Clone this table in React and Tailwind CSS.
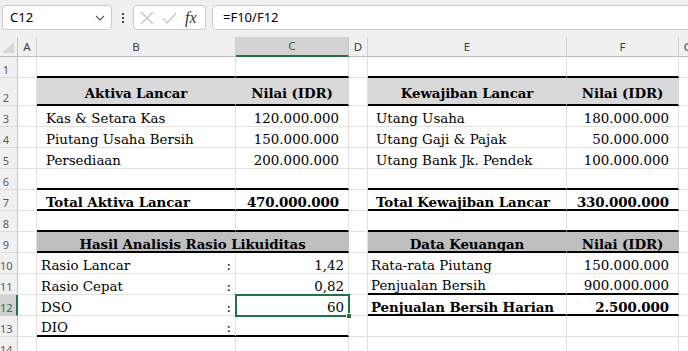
import { useState } from "react"

// lebar kolom: header baris, A, B, C, D, E, F, G
const cols = "grid grid-cols-[18px_19px_199px_113px_19px_199px_112px_19px]"
const serif = "font-['DejaVu_Serif',serif] text-[13.4px] leading-[12px] text-black"
const bold = "font-bold tracking-[-0.1px]"

const bot = {
  g: "border-b border-b-[#e1e1e1]",
  k: "border-b-2 border-b-black",
}
const rgt = {
  g: "border-r border-r-[#e1e1e1]",
  h: "border-r border-r-[#d9d9d9]",
  d: "border-r border-r-[#bfbfbf]",
}

const Cell = ({ b = "g", r = "g", className = "", children }) => (
  <div className={`${bot[b]} ${rgt[r]} flex items-end pb-[1px] whitespace-nowrap ${className}`}>
    {children}
  </div>
)

const RowHead = ({ n, sel }) => (
  <div
    className={
      sel
        ? "bg-[#d2d2d2] text-[#217346] border-r-2 border-r-[#217346] border-b border-b-[#d0d0d0] flex items-end font-['Noto_Sans',sans-serif] text-[11px] leading-[15px]"
        : "bg-[#f0f0f0] text-[#5a5a5a] border-r border-r-[#c4c4c4] border-b border-b-[#dcdcdc] flex items-end font-['Noto_Sans',sans-serif] text-[11px] leading-[15px]"
    }
  >
    <span className="w-[12px] text-center">{n}</span>
  </div>
)

const Row = ({ n, h = "h-[21px]", sel, children }) => (
  <div className={`${cols} ${h}`}>
    <RowHead n={n} sel={sel} />
    {children}
  </div>
)

const Empty = ({ n, k }) => (
  <Row n={n}>
    <Cell />
    <Cell b={k ? "k" : "g"} />
    <Cell b={k ? "k" : "g"} />
    <Cell />
    <Cell b={k ? "k" : "g"} />
    <Cell b={k ? "k" : "g"} />
    <Cell />
  </Row>
)

const ColHead = ({ label, sel }) => (
  <div
    className={
      sel
        ? "bg-[#d3d3d3] text-[#1f6b42] border-r border-r-[#c8c8c8] border-b-2 border-b-[#217346] flex items-center justify-center"
        : "bg-[#f0f0f0] text-[#3c3c3c] border-r border-r-[#d2d2d2] border-b border-b-[#bcbcbc] flex items-center justify-center"
    }
  >
    {label}
  </div>
)

const FormulaBar = () => (
  <div className="h-[37px] bg-[#f0f0f0] flex items-start pt-[5px] font-['Noto_Sans',sans-serif] text-[13px] text-black">
    <div className="ml-[2px] w-[110px] h-[25px] shrink-0 bg-white border border-[#cacaca] rounded-[4px] flex items-center justify-between pl-[7px] pr-[6px]">
      <span>C12</span>
      <svg width="10" height="6" viewBox="0 0 10 6" fill="none" stroke="#555" strokeWidth="1.1">
        <polyline points="1,1 5,5 9,1" />
      </svg>
    </div>
    <div className="w-[21px] h-[25px] shrink-0 flex flex-col items-center justify-center gap-[2px]">
      <span className="w-[2px] h-[2px] bg-[#444]" />
      <span className="w-[2px] h-[2px] bg-[#444]" />
      <span className="w-[2px] h-[2px] bg-[#444]" />
    </div>
    <div className="w-[73px] h-[25px] shrink-0 bg-white border border-[#cacaca] rounded-[4px] flex items-center pl-[6px] gap-[8px]">
      <svg width="14" height="14" viewBox="0 0 14 14" stroke="#c2c2c2" strokeWidth="1.2">
        <line x1="1" y1="1" x2="13" y2="13" />
        <line x1="13" y1="1" x2="1" y2="13" />
      </svg>
      <svg width="15" height="12" viewBox="0 0 15 12" fill="none" stroke="#c2c2c2" strokeWidth="1.2">
        <polyline points="1,6 5,11 14,1" />
      </svg>
      <span className="font-['Liberation_Serif',serif] italic text-[16px] text-[#333] leading-none">fx</span>
    </div>
    <div className="ml-[6px] w-[490px] h-[25px] shrink-0 bg-white border border-[#cacaca] rounded-[4px] flex items-center pl-[10px]">
      =F10/F12
    </div>
  </div>
)

export default function App() {
  const [aktif] = useState("C12")

  return (
    <div className="w-[688px] h-[351px] overflow-hidden bg-white">
      <FormulaBar />

      <div className={`${cols} h-[20px] font-['Noto_Sans',sans-serif] text-[11.5px]`}>
        <div className="bg-[#f0f0f0] border-r border-r-[#c4c4c4] border-b border-b-[#bcbcbc] flex items-end justify-end pr-[3px] pb-[3px]">
          <svg width="12" height="11" viewBox="0 0 12 11">
            <polygon points="12,0 12,11 0,11" fill="#d6d6d6" />
          </svg>
        </div>
        <ColHead label="A" />
        <ColHead label="B" />
        <ColHead label="C" sel={aktif === "C12"} />
        <ColHead label="D" />
        <ColHead label="E" />
        <ColHead label="F" />
        <ColHead label="G" />
      </div>

      <div className={serif}>
        <Empty n="1" k />

        <Row n="2" h="h-[28px]">
          <Cell />
          <Cell b="k" r="h" className={`bg-[#d9d9d9] justify-center pb-[5px] ${bold}`}>Aktiva Lancar</Cell>
          <Cell b="k" r="h" className={`bg-[#d9d9d9] justify-center pb-[5px] ${bold}`}>Nilai (IDR)</Cell>
          <Cell />
          <Cell b="k" r="h" className={`bg-[#d9d9d9] justify-center pb-[5px] ${bold}`}>Kewajiban Lancar</Cell>
          <Cell b="k" r="h" className={`bg-[#d9d9d9] justify-center pb-[5px] ${bold}`}>Nilai (IDR)</Cell>
          <Cell />
        </Row>

        <Row n="3">
          <Cell />
          <Cell className="pl-[9px]">Kas &amp; Setara Kas</Cell>
          <Cell className="justify-end pr-[9px]">120.000.000</Cell>
          <Cell />
          <Cell className="pl-[8px]">Utang Usaha</Cell>
          <Cell className="justify-end pr-[9px]">180.000.000</Cell>
          <Cell />
        </Row>
        <Row n="4">
          <Cell />
          <Cell className="pl-[9px]">Piutang Usaha Bersih</Cell>
          <Cell className="justify-end pr-[9px]">150.000.000</Cell>
          <Cell />
          <Cell className="pl-[8px]">Utang Gaji &amp; Pajak</Cell>
          <Cell className="justify-end pr-[9px]">50.000.000</Cell>
          <Cell />
        </Row>
        <Row n="5">
          <Cell />
          <Cell className="pl-[9px]">Persediaan</Cell>
          <Cell className="justify-end pr-[9px]">200.000.000</Cell>
          <Cell />
          <Cell className="pl-[8px]">Utang Bank Jk. Pendek</Cell>
          <Cell className="justify-end pr-[9px]">100.000.000</Cell>
          <Cell />
        </Row>

        <Empty n="6" k />

        <Row n="7">
          <Cell />
          <Cell b="k" className={`pl-[9px] ${bold}`}>Total Aktiva Lancar</Cell>
          <Cell b="k" className={`justify-end pr-[9px] ${bold}`}>470.000.000</Cell>
          <Cell />
          <Cell b="k" className={`pl-[8px] ${bold}`}>Total Kewajiban Lancar</Cell>
          <Cell b="k" className={`justify-end pr-[9px] ${bold}`}>330.000.000</Cell>
          <Cell />
        </Row>

        <Empty n="8" k />

        <Row n="9">
          <Cell />
          <Cell b="k" r="d" className={`col-span-2 bg-[#bfbfbf] justify-center ${bold}`}>
            Hasil Analisis Rasio Likuiditas
          </Cell>
          <Cell />
          <Cell b="k" r="d" className={`bg-[#bfbfbf] justify-center ${bold}`}>Data Keuangan</Cell>
          <Cell b="k" r="d" className={`bg-[#bfbfbf] justify-center ${bold}`}>Nilai (IDR)</Cell>
          <Cell />
        </Row>

        <Row n="10">
          <Cell />
          <Cell className="justify-between pl-[4px] pr-[4px]"><span>Rasio Lancar</span><span>:</span></Cell>
          <Cell className="justify-end pr-[4px]">1,42</Cell>
          <Cell />
          <Cell className="pl-[3px]">Rata-rata Piutang</Cell>
          <Cell className="justify-end pr-[9px]">150.000.000</Cell>
          <Cell />
        </Row>
        <Row n="11">
          <Cell />
          <Cell className="justify-between pl-[4px] pr-[4px]"><span>Rasio Cepat</span><span>:</span></Cell>
          <Cell className="justify-end pr-[4px]">0,82</Cell>
          <Cell />
          <Cell b="k" className="pl-[3px]">Penjualan Bersih</Cell>
          <Cell b="k" className="justify-end pr-[9px]">900.000.000</Cell>
          <Cell />
        </Row>
        <Row n="12" sel>
          <Cell />
          <Cell className="justify-between pl-[4px] pr-[4px]"><span>DSO</span><span>:</span></Cell>
          <Cell className="relative justify-end pr-[4px]">
            60
            <span className="absolute z-10 -left-[1px] -top-[1px] -right-[2px] -bottom-[2px] border-2 border-[#217346]" />
            <span className="absolute z-10 -right-[4px] -bottom-[4px] w-[6px] h-[6px] bg-[#217346] border border-white" />
          </Cell>
          <Cell />
          <Cell b="k" className={`pl-[3px] ${bold}`}>Penjualan Bersih Harian</Cell>
          <Cell b="k" className={`justify-end pr-[9px] ${bold}`}>2.500.000</Cell>
          <Cell />
        </Row>
        <Row n="13">
          <Cell />
          <Cell b="k" className="justify-between pl-[4px] pr-[4px]"><span>DIO</span><span>:</span></Cell>
          <Cell b="k" />
          <Cell />
          <Cell />
          <Cell />
          <Cell />
        </Row>

        <Empty n="14" />
      </div>
    </div>
  )
}
